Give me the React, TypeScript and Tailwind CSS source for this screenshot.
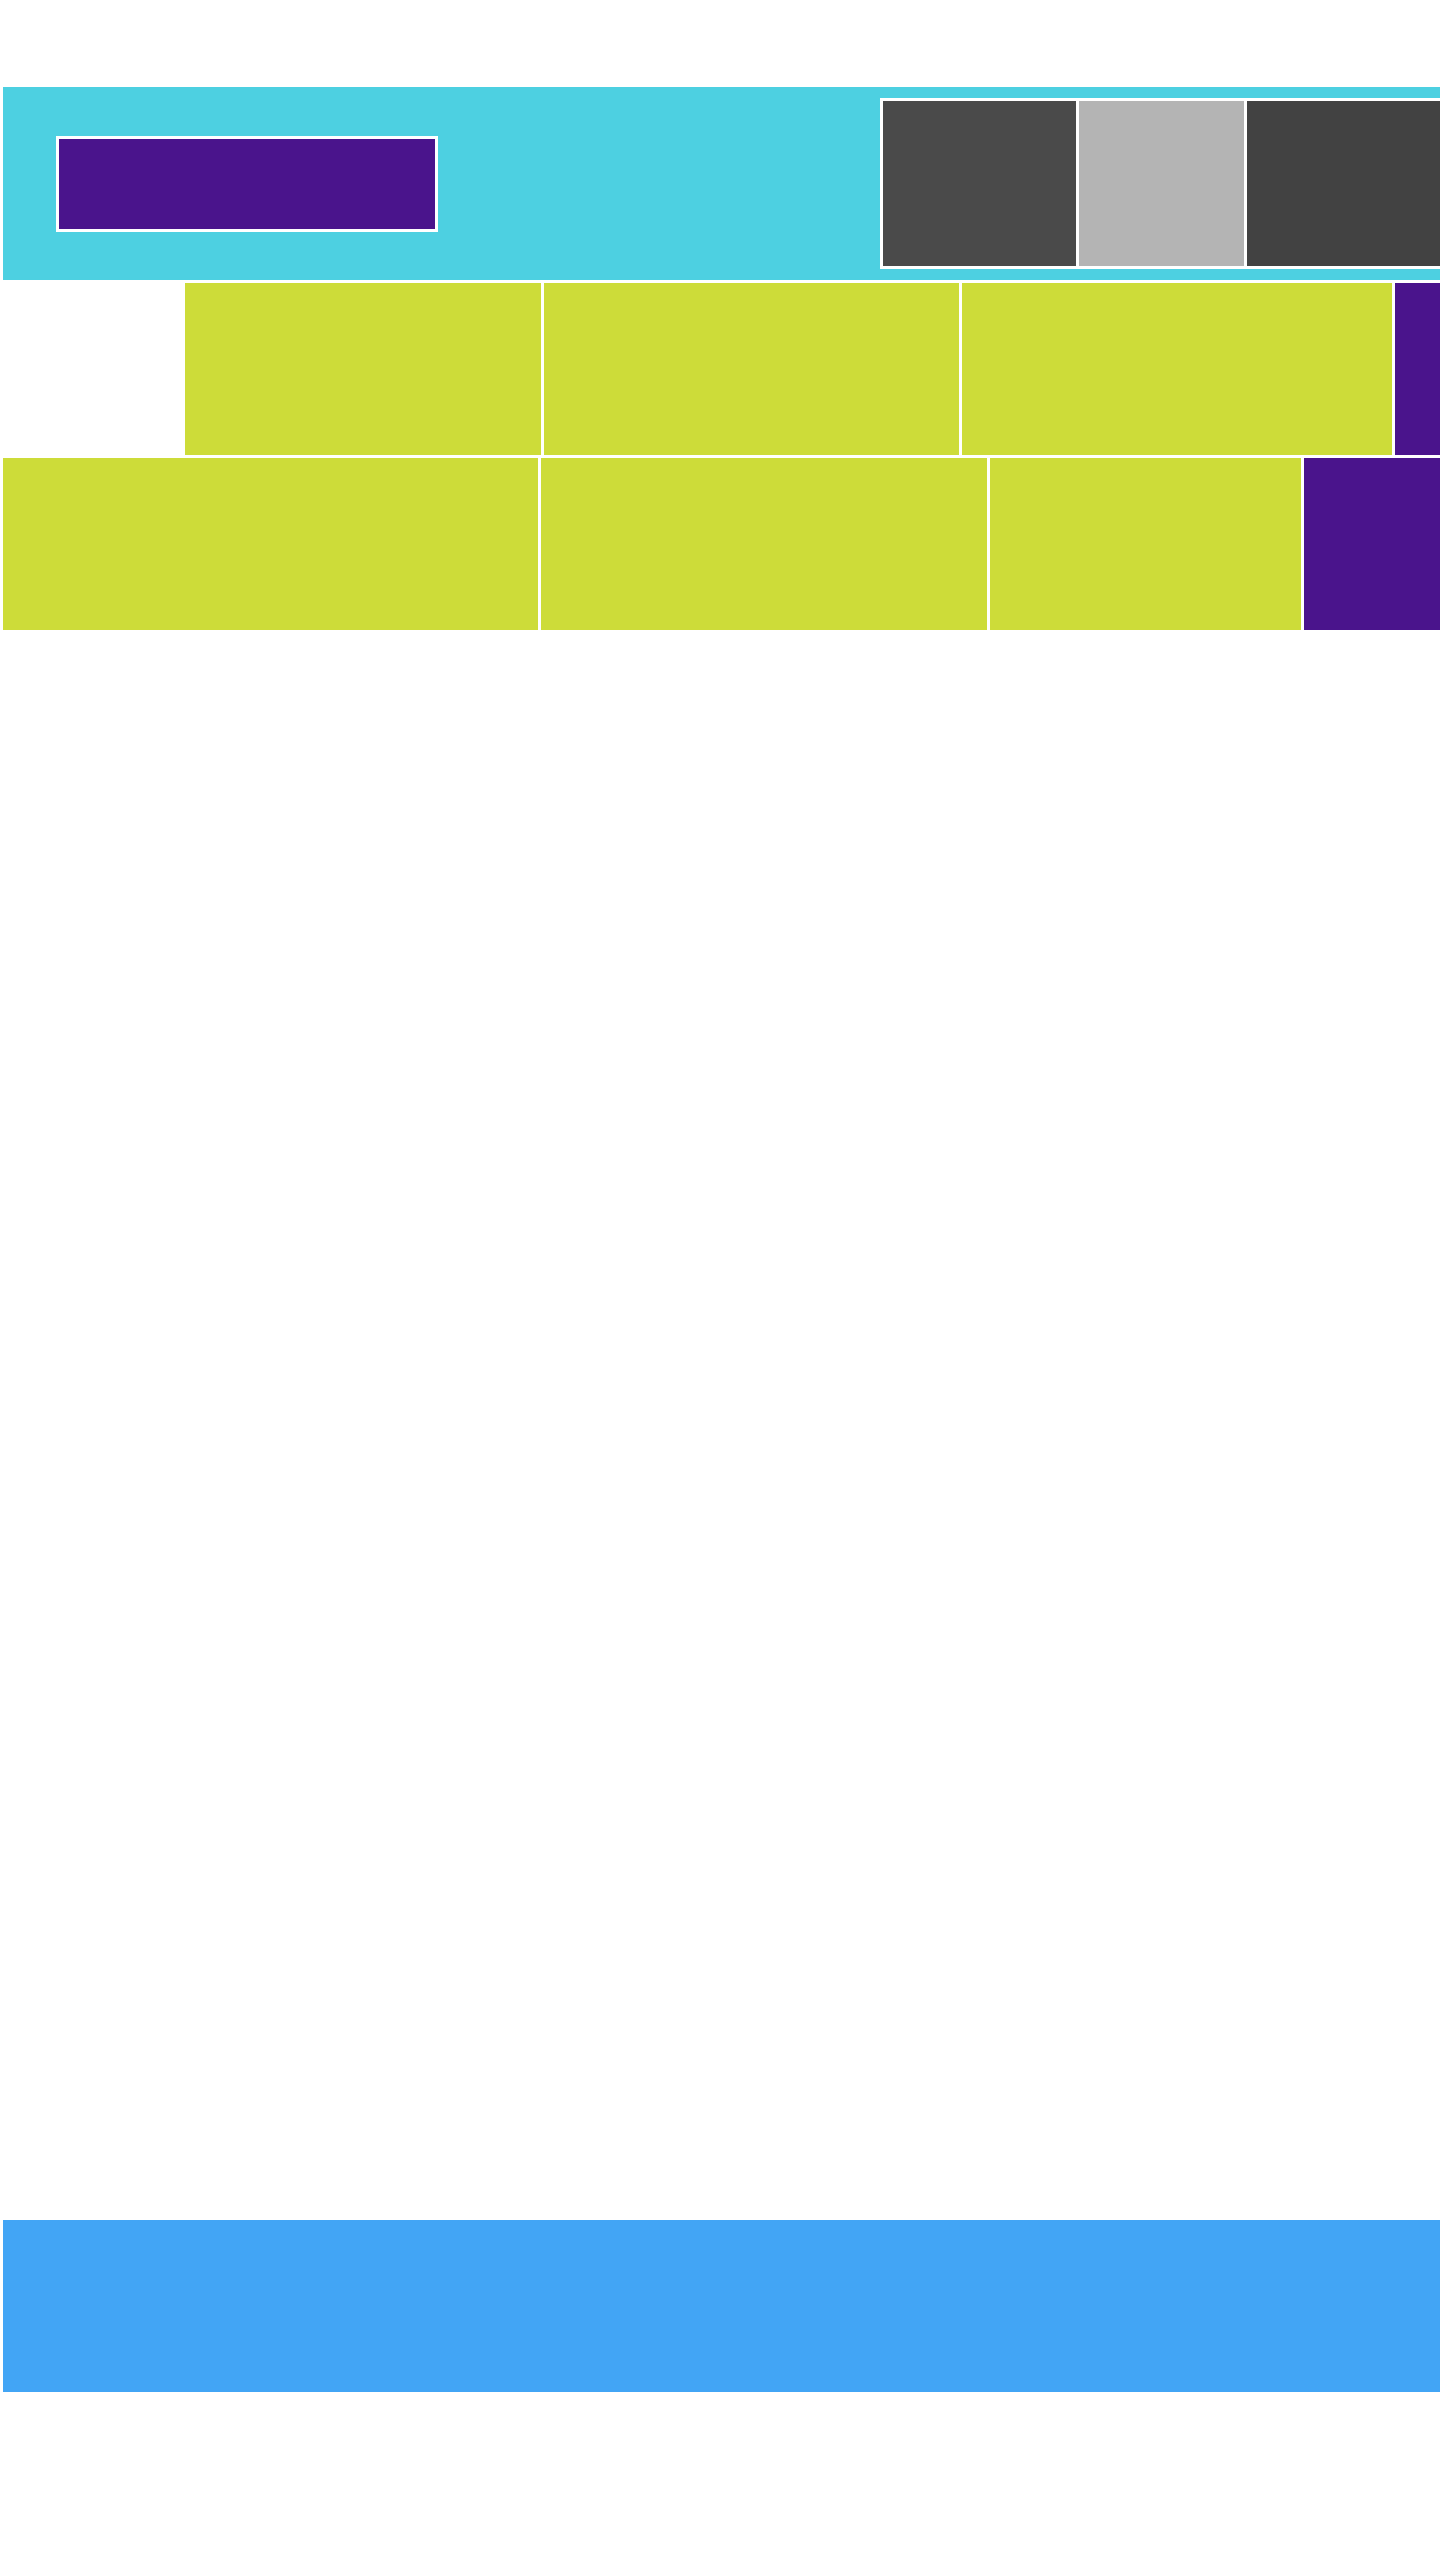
export default function App() {
    return (
        <div className="min-h-screen bg-white overflow-hidden pl-[3px] pt-[87px]">
            {/* Header band: logo block + image strip */}
            <header className="flex items-center h-[193px] bg-[#4DD0E1] pl-[53px] overflow-hidden">
                <div className="shrink-0 w-[382px] h-[96px] border-[3px] border-white bg-[#4A148C]" />
                <div className="shrink-0 ml-[442px] flex gap-[3px] bg-white border-[3px] border-white">
                    <div className="shrink-0 w-[193px] h-[165px] bg-[#4A4A4A]" />
                    <div className="shrink-0 w-[165px] h-[165px] bg-[#B4B4B4]" />
                    <div className="shrink-0 w-[260px] h-[165px] bg-[#424242]" />
                </div>
            </header>

            {/* Tile row 1 */}
            <div className="mt-[3px] flex gap-[3px] h-[172px] pl-[182px] overflow-hidden">
                <div className="shrink-0 w-[356px] bg-[#CDDC39]" />
                <div className="shrink-0 w-[415px] bg-[#CDDC39]" />
                <div className="shrink-0 w-[430px] bg-[#CDDC39]" />
                <div className="shrink-0 w-[120px] bg-[#4A148C]" />
            </div>

            {/* Tile row 2 */}
            <div className="mt-[3px] flex gap-[3px] h-[172px] overflow-hidden">
                <div className="shrink-0 w-[535px] bg-[#CDDC39]" />
                <div className="shrink-0 w-[446px] bg-[#CDDC39]" />
                <div className="shrink-0 w-[311px] bg-[#CDDC39]" />
                <div className="shrink-0 w-[200px] bg-[#4A148C]" />
            </div>

            {/* Footer band */}
            <footer className="mt-[1590px] h-[172px] bg-[#42A5F5]" />
        </div>
    );
}
